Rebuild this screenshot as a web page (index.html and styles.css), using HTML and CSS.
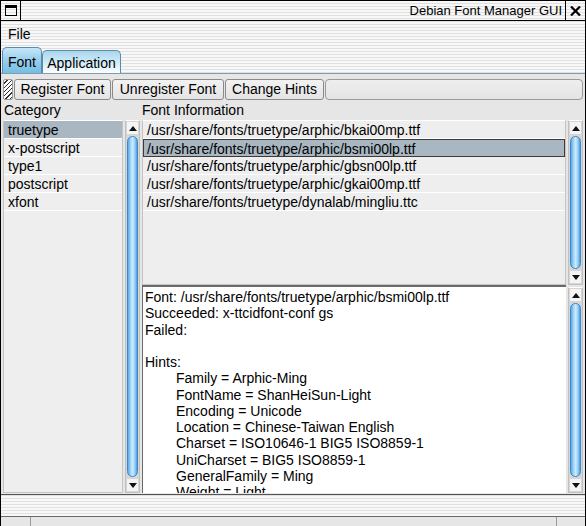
FILE: index.html
```html
<!DOCTYPE html>
<html>
<head>
<meta charset="utf-8">
<title>Debian Font Manager GUI</title>
<link rel="stylesheet" href="styles.css">
</head>
<body>
<div class="window">
  <div class="titlebar">
    <div class="tb-btn tb-icon">
      <svg width="12" height="11" viewBox="0 0 12 11"><rect x="0.5" y="0.5" width="11" height="10" fill="none" stroke="#000"/><rect x="0" y="0" width="12" height="3" fill="#000"/></svg>
    </div>
    <div class="title">Debian Font Manager GUI</div>
    <div class="tb-btn tb-close">
      <svg width="11" height="10" viewBox="0 0 11 10"><path d="M1 0.5 L10 9.5 M10 0.5 L1 9.5" stroke="#000" stroke-width="2.2" fill="none"/></svg>
    </div>
  </div>
  <div class="menubar"><span class="menu">File</span></div>
  <div class="tabbar">
    <div class="tab tab-active">Font</div>
    <div class="tab tab-inactive">Application</div>
  </div>
  <div class="page">
    <div class="toolbar">
      <div class="handle"></div>
      <div class="tbtn w-reg">Register Font</div>
      <div class="tbtn w-unreg">Unregister Font</div>
      <div class="tbtn w-hints">Change Hints</div>
      <div class="tb-fill"></div>
    </div>
    <div class="labels">
      <div class="lab-cat">Category</div>
      <div class="lab-info">Font Information</div>
    </div>
    <div class="panes">
      <div class="list cat">
        <div class="row sel">truetype</div>
        <div class="row">x-postscript</div>
        <div class="row">type1</div>
        <div class="row">postscript</div>
        <div class="row">xfont</div>
      </div>
      <div class="sb">
        <div class="sb-arrow"><span class="tri-up"></span></div>
        <div class="thumb"></div>
        <div class="sb-arrow"><span class="tri-down"></span></div>
      </div>
      <div class="right">
        <div class="rtop">
          <div class="list files">
            <div class="row">/usr/share/fonts/truetype/arphic/bkai00mp.ttf</div>
            <div class="row sel focus">/usr/share/fonts/truetype/arphic/bsmi00lp.ttf</div>
            <div class="row">/usr/share/fonts/truetype/arphic/gbsn00lp.ttf</div>
            <div class="row">/usr/share/fonts/truetype/arphic/gkai00mp.ttf</div>
            <div class="row">/usr/share/fonts/truetype/dynalab/mingliu.ttc</div>
          </div>
          <div class="sb">
            <div class="sb-arrow"><span class="tri-up"></span></div>
            <div class="thumb"></div>
            <div class="sb-arrow"><span class="tri-down"></span></div>
          </div>
        </div>
        <div class="rbottom">
          <div class="info">
            <div class="line">Font: /usr/share/fonts/truetype/arphic/bsmi00lp.ttf</div>
            <div class="line">Succeeded: x-ttcidfont-conf gs</div>
            <div class="line">Failed:</div>
            <div class="line">&nbsp;</div>
            <div class="line">Hints:</div>
            <div class="line ind">Family = Arphic-Ming</div>
            <div class="line ind">FontName = ShanHeiSun-Light</div>
            <div class="line ind">Encoding = Unicode</div>
            <div class="line ind">Location = Chinese-Taiwan English</div>
            <div class="line ind">Charset = ISO10646-1 BIG5 ISO8859-1</div>
            <div class="line ind">UniCharset = BIG5 ISO8859-1</div>
            <div class="line ind">GeneralFamily = Ming</div>
            <div class="line ind">Weight = Light</div>
          </div>
          <div class="sb sb-bottom">
            <div class="sb-arrow"><span class="tri-up"></span></div>
            <div class="thumb"></div>
            <div class="sb-arrow"><span class="tri-down"></span></div>
          </div>
        </div>
      </div>
    </div>
  </div>
  <div class="gap"></div>
  <div class="status">
    <div class="st st1"></div>
    <div class="st st2"></div>
    <div class="st st3"></div>
  </div>
</div>
</body>
</html>
```
FILE: styles.css
```css
html, body {
  margin: 0;
  padding: 0;
  background: #e6e6e6;
}
body {
  font-family: "Liberation Sans", Arial, sans-serif;
  font-size: 14px;
  color: #000;
}
.window {
  width: 586px;
  height: 526px;
  box-sizing: border-box;
  border: 1px solid #000;
  border-bottom: none;
  overflow: hidden;
  display: flex;
  flex-direction: column;
  background: repeating-linear-gradient(to bottom, #f8f8f8 0, #f8f8f8 2px, #e0e0e0 2px, #e0e0e0 3px);
}
.titlebar {
  height: 19px;
  flex: none;
  border-bottom: 1px solid #000;
  display: flex;
  font-size: 13px;
}
.tb-btn {
  width: 19px;
  display: flex;
  align-items: center;
  justify-content: center;
}
.tb-icon { border-right: 1px solid #000; }
.tb-close { border-left: 1px solid #000; }
.title {
  flex: 1;
  text-align: right;
  padding-right: 3px;
  line-height: 20px;
}
.menubar {
  height: 25px;
  flex: none;
  display: flex;
  align-items: center;
  padding-left: 7px;
}
.tabbar {
  height: 27px;
  flex: none;
  display: flex;
  align-items: flex-end;
  padding-left: 1px;
}
.tab {
  box-sizing: border-box;
  border: 1px solid #5b8caa;
  border-bottom: none;
  border-radius: 5px 5px 0 0;
  text-align: center;
}
.tab-active {
  width: 40px;
  height: 26px;
  line-height: 28px;
  background: linear-gradient(to bottom, #c6e6f6 0%, #9fd2ee 40%, #74bde3 100%);
}
.tab-inactive {
  width: 79px;
  height: 23px;
  line-height: 25px;
  background: linear-gradient(to bottom, #a9d5ee 0%, #d4ecf8 55%, #ffffff 100%);
}
.page {
  height: 422px;
  flex: none;
  box-sizing: border-box;
  border-top: 1px solid #7f9cb0;
  border-bottom: 1px solid #555;
  background: #e6e6e6;
  padding: 5px 2px 1px 2px;
  display: flex;
  flex-direction: column;
}
.toolbar {
  height: 21px;
  flex: none;
  display: flex;
  gap: 1px;
}
.handle {
  width: 10px;
  box-sizing: border-box;
  border: 1px solid #999;
  border-radius: 2px;
  background: repeating-linear-gradient(135deg, #ffffff 0, #ffffff 2px, #333 2px, #333 3px);
}
.tbtn {
  box-sizing: border-box;
  border: 1px solid #8a8a8a;
  border-radius: 3px;
  background: linear-gradient(to bottom, #f2f2f2, #e4e4e4);
  text-align: center;
  line-height: 19px;
  white-space: nowrap;
}
.w-reg { width: 97px; }
.w-unreg { width: 112px; }
.w-hints { width: 99px; }
.tb-fill {
  flex: 1;
  box-sizing: border-box;
  border: 1px solid #9a9a9a;
  border-radius: 4px;
  background: linear-gradient(to bottom, #eeeeee, #e4e4e4);
}
.labels {
  height: 20px;
  flex: none;
  display: flex;
  line-height: 20px;
}
.lab-cat {
  width: 138px;
  padding-left: 1px;
}
.lab-info {
  flex: 1;
}
.panes {
  flex: 1;
  display: flex;
  gap: 2px;
  min-height: 0;
}
.list {
  box-sizing: border-box;
  background: #eeeeee;
  border: 1px solid #c4c4c4;
  border-top-color: #ffffff;
  overflow: hidden;
}
.cat {
  width: 120px;
}
.row {
  height: 17px;
  line-height: 19px;
  border-bottom: 1px solid #ffffff;
  padding-left: 4px;
  white-space: nowrap;
  overflow: hidden;
}
.row.sel {
  background: #a9b7c2;
}
.row.focus {
  box-sizing: border-box;
  height: 18px;
  border: 1px solid #3e3a36;
  padding-left: 3px;
  line-height: 18px;
}
.sb {
  width: 15px;
  flex: none;
  box-sizing: border-box;
  background: #d6d6d6;
  border: 1px solid #c0c0c0;
  border-top-color: #ffffff;
  display: flex;
  flex-direction: column;
  padding: 1px 1px;
}
.sb-arrow {
  height: 12px;
  flex: none;
  background: #f4f4f4;
  display: flex;
  align-items: center;
  justify-content: center;
}
.tri-up {
  width: 0;
  height: 0;
  border-left: 4px solid transparent;
  border-right: 4px solid transparent;
  border-bottom: 5px solid #111;
}
.tri-down {
  width: 0;
  height: 0;
  border-left: 4px solid transparent;
  border-right: 4px solid transparent;
  border-top: 5px solid #111;
}
.thumb {
  flex: 1;
  margin: 2px 0;
  box-sizing: border-box;
  border: 1px solid #3a88cf;
  border-radius: 6px;
  background: linear-gradient(to right, #5aa7e5 0%, #a6d6f7 30%, #cbecfd 52%, #93cdf3 78%, #4c9bdf 100%);
}
.right {
  flex: 1;
  display: flex;
  flex-direction: column;
  min-width: 0;
}
.rtop {
  height: 165px;
  flex: none;
  display: flex;
  gap: 2px;
}
.files {
  flex: 1;
}
.rbottom {
  flex: 1;
  display: flex;
  gap: 2px;
  min-height: 0;
}
.info {
  flex: 1;
  box-sizing: border-box;
  background: #ffffff;
  border-top: 2px solid #6a6a6a;
  border-left: 1px solid #6a6a6a;
  padding: 2px 0 0 2px;
  overflow: hidden;
}
.line {
  height: 16.25px;
  line-height: 17px;
  white-space: nowrap;
}
.ind {
  padding-left: 31px;
}
.sb-bottom {
  margin-top: 2px;
}
.gap {
  height: 21px;
  flex: none;
}
.status {
  flex: 1;
  border-top: 1px solid #6a6a6a;
  background: #e6e6e6;
  display: flex;
}
.st1 {
  width: 29px;
  border-right: 1px solid #9a9a9a;
}
.st2 {
  flex: 1;
  border-right: 1px solid #9a9a9a;
}
.st3 {
  width: 28px;
}
```
